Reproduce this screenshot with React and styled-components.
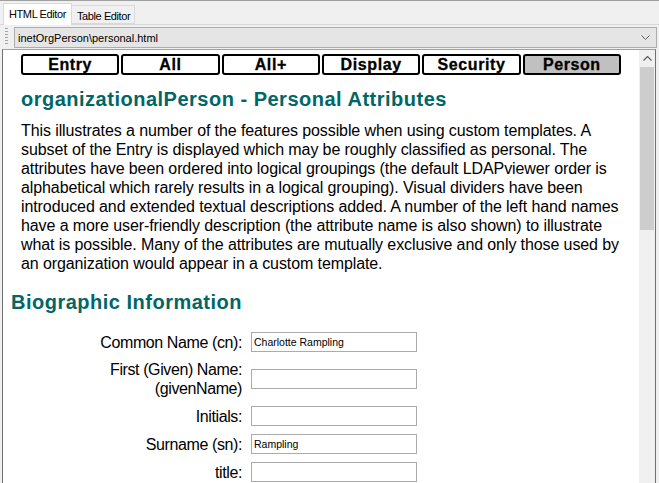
import React from 'react';
import styled, { createGlobalStyle } from 'styled-components';

const GlobalStyle = createGlobalStyle`
  html, body {
    margin: 0;
    padding: 0;
    background: #f0f0f0;
  }
  body {
    font-family: "Liberation Sans", Arial, sans-serif;
  }
`;

const Window = styled.div`
  width: 659px;
  height: 483px;
  overflow: hidden;
  box-sizing: border-box;
  border-top: 1px solid #a0a0a0;
  background: #f0f0f0;
  display: flex;
  flex-direction: column;
`;

const TabStrip = styled.div`
  height: 24px;
  flex: none;
  box-sizing: border-box;
  display: flex;
  align-items: flex-end;
  padding-left: 3px;
  border-bottom: 1px solid #d9d9d9;
`;

const Tab = styled.div`
  box-sizing: border-box;
  height: ${p => (p.$active ? '22px' : '19px')};
  margin-bottom: ${p => (p.$active ? '-1px' : '0')};
  padding: ${p => (p.$active ? '2px 5px 0 5px' : '2px 4px 0 5px')};
  background: ${p => (p.$active ? '#ffffff' : '#f0f0f0')};
  border: 1px solid #d9d9d9;
  border-bottom: ${p => (p.$active ? 'none' : '1px solid #d9d9d9')};
  border-left: ${p => (p.$active ? '1px solid #d9d9d9' : 'none')};
  font-size: 11px;
  letter-spacing: -0.4px;
  line-height: 16px;
  color: #000;
  white-space: nowrap;
`;

const ToolRow = styled.div`
  height: 24px;
  flex: none;
  display: flex;
  align-items: center;
  padding: 0 2px 0 5px;
  box-sizing: border-box;
`;

const Grip = styled.div`
  width: 3px;
  height: 18px;
  margin-right: 6px;
  background: repeating-linear-gradient(
    to bottom,
    #a5a5a5 0 1px,
    transparent 1px 3px
  );
`;

const Combo = styled.div`
  flex: 1;
  height: 21px;
  box-sizing: border-box;
  margin-top: 1px;
  border: 1px solid #adadad;
  background: #e5e5e5;
  display: flex;
  align-items: center;
  justify-content: space-between;
  padding: 0 6px 0 3px;
  font-size: 11px;
  color: #000;
`;

const Frame = styled.div`
  flex: 1;
  display: flex;
  margin-left: 2px;
  width: 654px;
  box-sizing: border-box;
  border-top: 1px solid #a0a0a0;
  border-left: 1px solid #707070;
  border-right: 1px solid #707070;
  min-height: 0;
`;

const Page = styled.div`
  flex: 1;
  background: #ffffff;
  padding: 4px 8px 0 8px;
  overflow: hidden;
  color: #000;
`;

const Intro = styled.div`
  margin: 0 10px;
`;

const NavRow = styled.div`
  display: grid;
  grid-template-columns: repeat(6, 1fr);
  gap: 2px;
`;

const NavButton = styled.div`
  height: 21px;
  box-sizing: border-box;
  border: 2px solid #000;
  border-radius: 3px;
  background: ${p => (p.$current ? '#c0c0c0' : '#ffffff')};
  font-weight: bold;
  font-size: 16px;
  letter-spacing: 0.6px;
  line-height: 17px;
  text-align: center;
  -webkit-text-stroke: 0.3px #000;
`;

const Heading = styled.div`
  color: #006666;
  font-weight: bold;
  font-size: 20px;
  letter-spacing: 0.5px;
  line-height: 23px;
  margin: ${p => p.$margin || '0'};
`;

const Para = styled.p`
  margin: 10px 0 0 0;
  font-size: 16px;
  letter-spacing: -0.1px;
  line-height: 19px;
`;

const FormGrid = styled.div`
  display: grid;
  grid-template-columns: 231px 166px;
  column-gap: 9px;
  margin-top: 14px;
`;

const Label = styled.div`
  text-align: right;
  font-size: 16px;
  letter-spacing: -0.4px;
  line-height: 19px;
  padding: 4px 0;
  align-self: center;
`;

const Field = styled.input`
  align-self: center;
  width: 166px;
  height: 20px;
  box-sizing: border-box;
  border: 1px solid #ababab;
  padding: 0 2px;
  margin: 4px 0;
  font-family: "Liberation Sans", Arial, sans-serif;
  font-size: 10.5px;
  color: #000;
  background: #fff;
  outline: none;
`;

const ScrollBar = styled.div`
  width: 16px;
  flex: none;
  background: #f0f0f0;
  display: flex;
  flex-direction: column;
  align-items: center;
`;

const ScrollArrow = styled.div`
  height: 17px;
  width: 100%;
  display: flex;
  align-items: center;
  justify-content: center;
`;

const Thumb = styled.div`
  width: 14px;
  height: 163px;
  background: #cdcdcd;
`;

const navItems = ['Entry', 'All', 'All+', 'Display', 'Security', 'Person'];

const fields = [
  { label: 'Common Name (cn):', value: 'Charlotte Rampling' },
  { label: ['First (Given) Name:', '(givenName)'], value: '' },
  { label: 'Initials:', value: '' },
  { label: 'Surname (sn):', value: 'Rampling' },
  { label: 'title:', value: '' },
];

export default function App() {
  return (
    <Window>
      <GlobalStyle />
      <TabStrip>
        <Tab $active>HTML Editor</Tab>
        <Tab>Table Editor</Tab>
      </TabStrip>
      <ToolRow>
        <Grip />
        <Combo>
          <span>inetOrgPerson\personal.html</span>
          <svg width="9" height="5" viewBox="0 0 9 5">
            <path d="M0.5 0.5 L4.5 4.5 L8.5 0.5" fill="none" stroke="#606060" strokeWidth="1" />
          </svg>
        </Combo>
      </ToolRow>
      <Frame>
        <Page>
          <Intro>
            <NavRow>
              {navItems.map(n => (
                <NavButton key={n} $current={n === 'Person'}>{n}</NavButton>
              ))}
            </NavRow>
            <Heading $margin="13px 0 0 0">organizationalPerson - Personal Attributes</Heading>
            <Para>
              This illustrates a number of the features possible when using custom templates. A
              subset of the Entry is displayed which may be roughly classified as personal. The
              attributes have been ordered into logical groupings (the default LDAPviewer order is
              alphabetical which rarely results in a logical grouping). Visual dividers have been
              introduced and extended textual descriptions added. A number of the left hand names
              have a more user-friendly description (the attribute name is also shown) to illustrate
              what is possible. Many of the attributes are mutually exclusive and only those used by
              an organization would appear in a custom template.
            </Para>
          </Intro>
          <Heading $margin="18px 0 0 0">Biographic Information</Heading>
          <FormGrid>
            {fields.map((f, i) => (
              <React.Fragment key={i}>
                <Label>
                  {Array.isArray(f.label) ? (
                    <>
                      {f.label[0]}
                      <br />
                      {f.label[1]}
                    </>
                  ) : (
                    f.label
                  )}
                </Label>
                <Field readOnly defaultValue={f.value} />
              </React.Fragment>
            ))}
          </FormGrid>
        </Page>
        <ScrollBar>
          <ScrollArrow>
            <svg width="9" height="5" viewBox="0 0 9 5">
              <path d="M0.5 4.5 L4.5 0.5 L8.5 4.5" fill="none" stroke="#606060" strokeWidth="1.2" />
            </svg>
          </ScrollArrow>
          <Thumb />
        </ScrollBar>
      </Frame>
    </Window>
  );
}
